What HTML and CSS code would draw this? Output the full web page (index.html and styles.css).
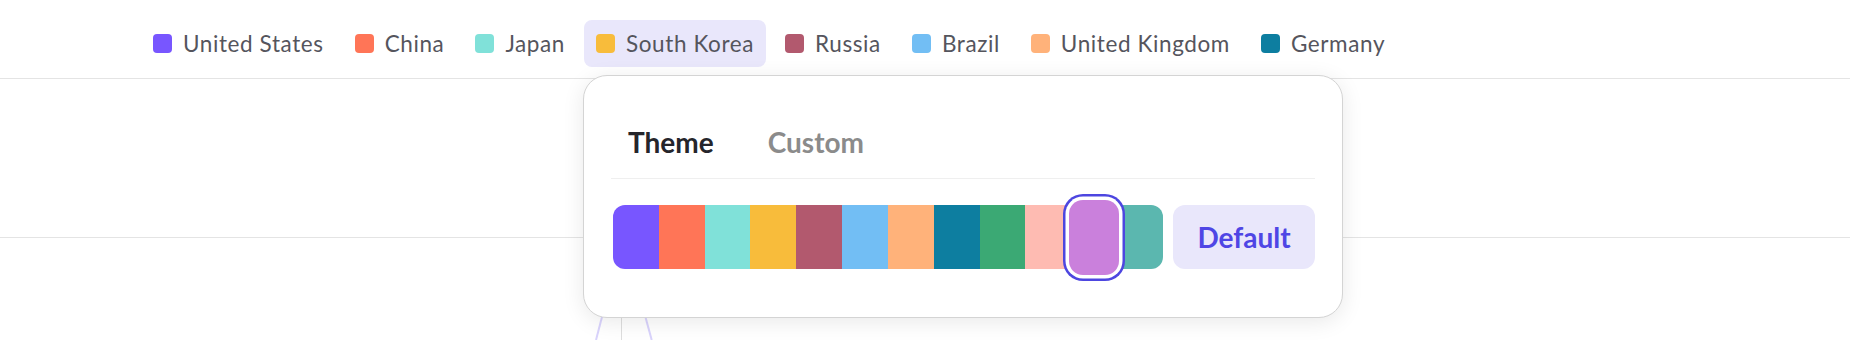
FILE: index.html
```html
<!DOCTYPE html>
<html lang="en">
<head>
  <meta charset="UTF-8" />
  <title>Breakdown colors</title>
  <link rel="stylesheet" href="styles.css">
</head>
<body>

  <!-- legend -->
  <div class="legend">
    <div class="legend-item"><span class="dot c1"></span>United States</div>
    <div class="legend-item"><span class="dot c2"></span>China</div>
    <div class="legend-item"><span class="dot c3"></span>Japan</div>
    <div class="legend-item active"><span class="dot c4"></span>South Korea</div>
    <div class="legend-item"><span class="dot c5"></span>Russia</div>
    <div class="legend-item"><span class="dot c6"></span>Brazil</div>
    <div class="legend-item"><span class="dot c7"></span>United Kingdom</div>
    <div class="legend-item"><span class="dot c8"></span>Germany</div>
  </div>

  <div class="chart-head"></div>

  <!-- chart behind the picker -->
  <div class="chart">
    <svg width="1850" height="102" viewBox="0 0 1850 102">
      <line x1="621.5" y1="0" x2="621.5" y2="102" stroke="#dedede" stroke-width="1" />
      <line x1="622.5" y1="0" x2="596" y2="102" stroke="#d9d3fc" stroke-width="2" />
      <line x1="624" y1="0" x2="651.7" y2="102" stroke="#d9d3fc" stroke-width="2" />
    </svg>
  </div>

  <!-- color picker popup -->
  <div class="picker">
    <div class="tabs">
      <div class="tab active">Theme</div>
      <div class="tab">Custom</div>
    </div>
    <div class="picker-row">
      <div class="palette">
        <span class="swatch c1"></span>
        <span class="swatch c2"></span>
        <span class="swatch c3"></span>
        <span class="swatch c4"></span>
        <span class="swatch c5"></span>
        <span class="swatch c6"></span>
        <span class="swatch c7"></span>
        <span class="swatch c8"></span>
        <span class="swatch c9"></span>
        <span class="swatch c10"></span>
        <span class="swatch c11 selected"></span>
        <span class="swatch c12"></span>
      </div>
      <button class="default-btn">Default</button>
    </div>
  </div>

</body>
</html>
```

FILE: styles.css
```css
body {
  margin: 0;
  font-family: Lato, "Open Sans", sans-serif;
  background: #fff;
  color: #333;
  position: relative;
}

/* palette colors */
.c1 { background: #7856ff; }
.c2 { background: #ff7557; }
.c3 { background: #80e1d9; }
.c4 { background: #f8bc3b; }
.c5 { background: #b2596e; }
.c6 { background: #72bef4; }
.c7 { background: #ffb27a; }
.c8 { background: #0d7ea0; }
.c9 { background: #3ba974; }
.c10 { background: #febbb2; }
.c11 { background: #ca80dc; }
.c12 { background: #5bb7af; }

.legend {
  display: flex;
  gap: 7px;
  height: 58px;
  padding: 20px 0 0 141px;
  border-bottom: 1px solid #e4e4e4;
}

.legend-item {
  display: flex;
  align-items: center;
  gap: 11px;
  height: 47px;
  padding: 0 12px;
  border-radius: 8px;
  font-size: 22.5px;
  letter-spacing: 0.6px;
  color: #55555d;
}

.legend-item.active {
  background: #e9e7fb;
}

.dot {
  width: 19px;
  height: 19px;
  border-radius: 4px;
  flex: none;
}

.chart-head {
  height: 158px;
  border-bottom: 1px solid #e4e4e4;
}

.chart {
  height: 102px;
  overflow: hidden;
}

.chart svg {
  display: block;
}

.picker {
  position: absolute;
  left: 583px;
  top: 75px;
  width: 760px;
  height: 243px;
  box-sizing: border-box;
  padding: 46px 27px 0;
  background: #fff;
  border: 1px solid #d4d4d4;
  border-radius: 24px;
  box-shadow: 0 4px 22px rgba(0,0,0,0.09);
}

.tabs {
  display: flex;
  gap: 54px;
  padding: 0 0 16px 17px;
  border-bottom: 1px solid #efefef;
}

.tab {
  font-size: 28px;
  line-height: 40px;
  font-weight: 700;
  color: #8b8b8b;
}

.tab.active {
  color: #25252b;
}

.picker-row {
  display: flex;
  align-items: center;
  gap: 10px;
  margin-top: 26px;
  padding-left: 2px;
}

.palette {
  display: flex;
  align-items: center;
  width: 550px;
  height: 64px;
  flex: none;
}

.swatch {
  width: 45.83px;
  height: 64px;
  flex: none;
}

.swatch:first-child {
  border-radius: 12px 0 0 12px;
}

.swatch:last-child {
  border-radius: 0 12px 12px 0;
}

.swatch.selected {
  position: relative;
  z-index: 1;
  width: 50px;
  height: 75px;
  margin: 0 -2.08px;
  border-radius: 14px;
  box-shadow: 0 0 0 3.5px #fff, 0 0 0 6px #4d46e0;
}

.default-btn {
  width: 142px;
  height: 64px;
  border: none;
  border-radius: 12px;
  background: #e9e7fb;
  color: #4f46e5;
  font-family: inherit;
  font-size: 28px;
  font-weight: 700;
  cursor: pointer;
}
```
